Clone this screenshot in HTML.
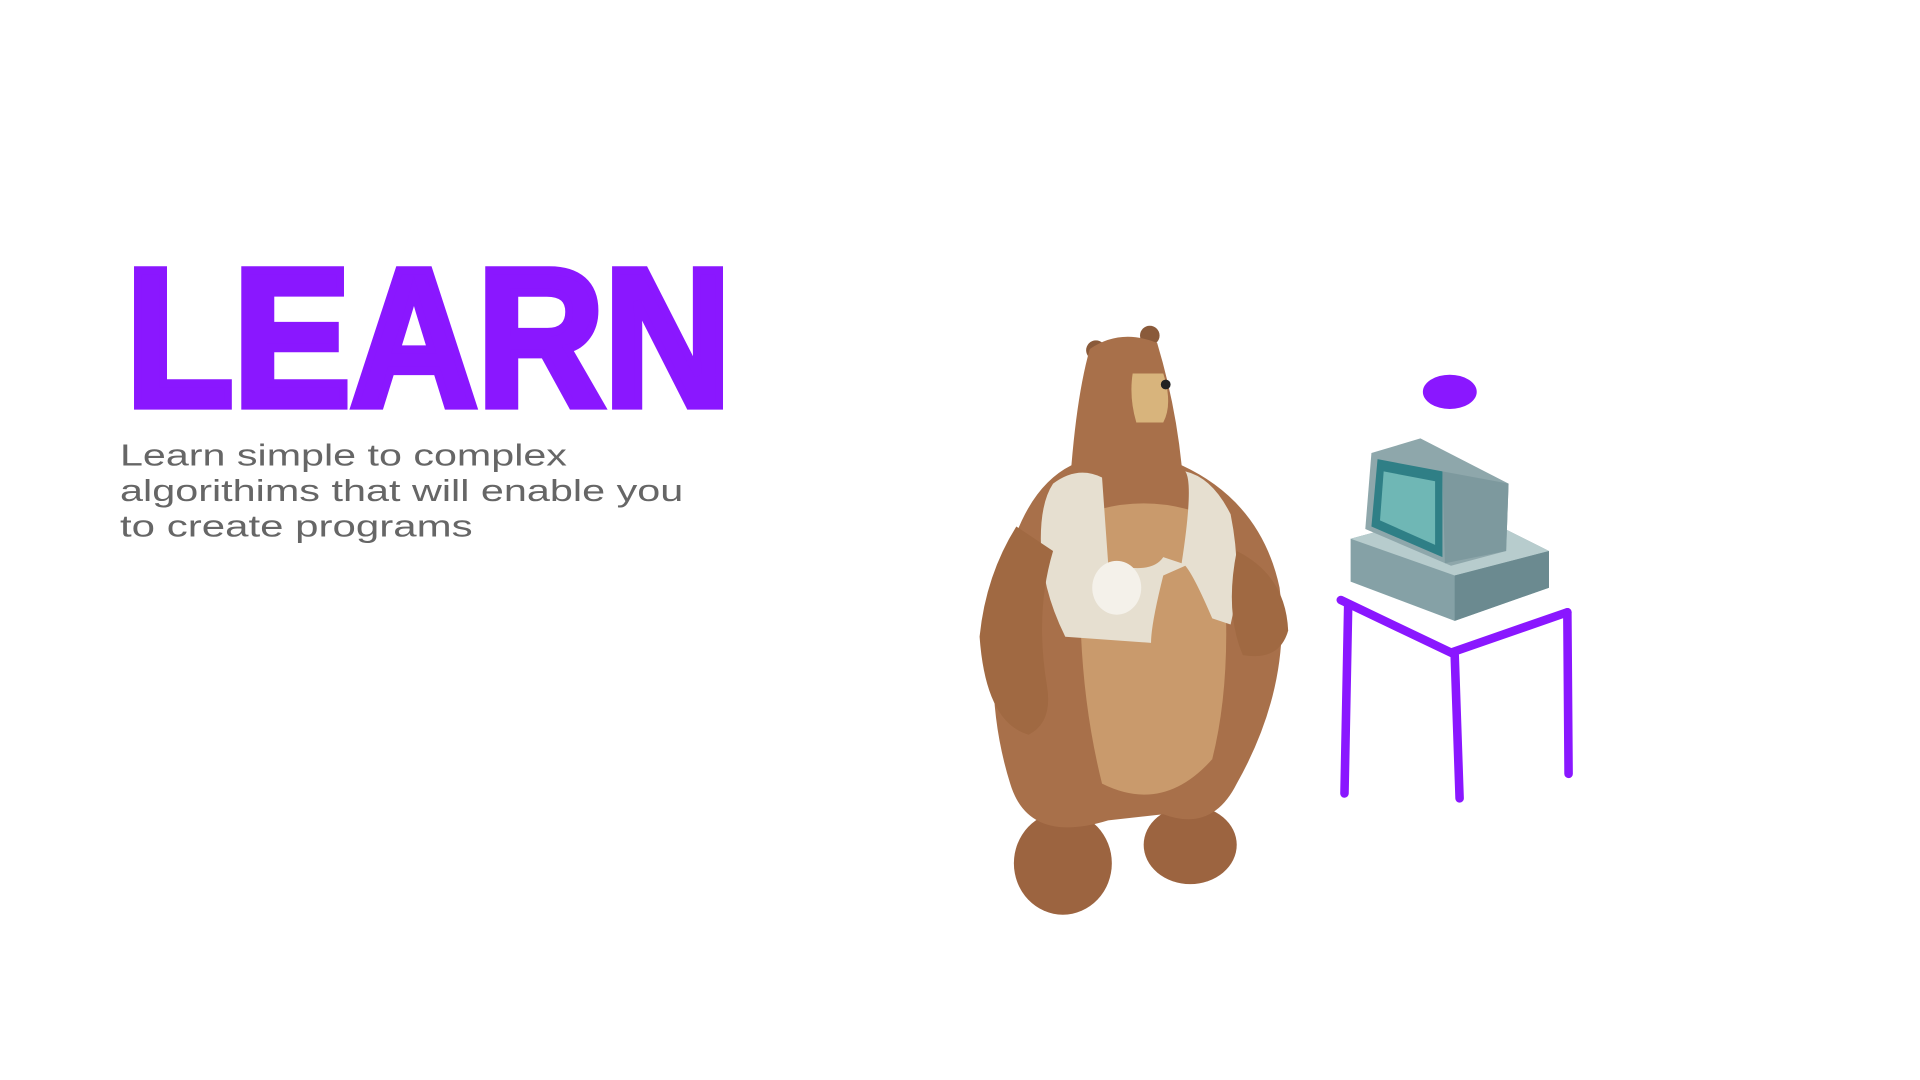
<!DOCTYPE html>
<html><head><meta charset="utf-8"><style>
html,body{margin:0;padding:0;background:#fff;width:1920px;height:1080px;overflow:hidden}
svg{display:block}
</style></head><body>
<svg width="1920" height="1080" viewBox="0 0 1568 882" xmlns="http://www.w3.org/2000/svg">
<text x="103" y="331" font-family="Liberation Sans, sans-serif" font-weight="bold" font-size="160" fill="#8a17ff" stroke="#8a17ff" stroke-width="7" stroke-linejoin="miter" textLength="494" lengthAdjust="spacingAndGlyphs">LEARN</text>
<g font-family="Liberation Sans, sans-serif" font-size="25" fill="#666">
<text x="98" y="380" textLength="365" lengthAdjust="spacingAndGlyphs">Learn simple to complex</text>
<text x="98" y="409" textLength="460" lengthAdjust="spacingAndGlyphs">algorithims that will enable you</text>
<text x="98" y="438" textLength="288" lengthAdjust="spacingAndGlyphs">to create programs</text>
</g>
<!-- bear -->
<g>
<circle cx="895" cy="286" r="8" fill="#8a5a3a"/>
<circle cx="939" cy="274" r="8" fill="#8a5a3a"/>
<ellipse cx="868" cy="705" rx="40" ry="42" fill="#9c6440"/>
<ellipse cx="972" cy="690" rx="38" ry="32" fill="#9c6440"/>
<path d="M890 285 Q915 268 945 280 Q960 330 965 380 Q1030 410 1045 480 Q1055 560 1010 640 Q990 680 950 665 L905 670 Q840 690 825 640 Q800 560 820 470 Q835 400 875 380 Q880 320 890 285Z" fill="#a8704a"/>
<path d="M885 420 Q940 400 995 425 Q1010 540 990 620 Q950 665 900 640 Q875 540 885 420Z" fill="#c99a6c"/>
<path d="M925 305 L950 305 Q958 330 950 345 L928 345 Q922 325 925 305Z" fill="#d8b47c"/>
<circle cx="952" cy="314" r="4" fill="#222"/>
<path d="M860 395 Q880 380 900 390 L905 460 Q940 470 950 455 L965 460 Q975 395 968 385 Q990 390 1005 420 Q1015 470 1005 510 L990 505 Q975 470 968 462 L950 470 Q940 510 940 525 L870 520 Q850 480 850 440 Q850 410 860 395Z" fill="#e6dfd0"/>
<ellipse cx="912" cy="480" rx="20" ry="22" fill="#f4f1ea"/>
<path d="M830 430 Q805 470 800 520 Q805 590 840 600 Q860 590 855 560 Q845 500 860 450Z" fill="#a06942"/>
<path d="M1010 450 Q1050 470 1052 515 Q1045 540 1015 535 Q1000 500 1010 450Z" fill="#a06942"/>
</g>
<!-- computer -->
<path d="M1103 440 L1195 415 L1265 450 L1265 480 L1188 507 L1103 475Z" fill="#85a1a6"/>
<path d="M1103 440 L1188 470 L1265 450 L1195 415Z" fill="#b7cccd"/>
<path d="M1188 470 L1188 507 L1265 480 L1265 450Z" fill="#6b8a90"/>
<path d="M1120 370 L1160 358 L1232 395 L1230 450 L1185 462 L1115 432Z" fill="#8ea7ab"/>
<path d="M1125 375 L1178 385 L1178 455 L1120 430Z" fill="#2f7f86"/>
<path d="M1130 385 L1172 393 L1172 445 L1127 425Z" fill="#6fb7b5"/>
<path d="M1178 385 L1232 395 L1230 450 L1180 460Z" fill="#7d999e"/>
<!-- scribble -->
<ellipse cx="1184" cy="320" rx="22" ry="14" fill="#8a17ff"/>
<!-- table -->
<g stroke="#8a17ff" stroke-width="7" fill="none" stroke-linecap="round">
<path d="M1095 490 L1185 533 L1280 500"/>
<path d="M1101 495 L1098 648"/>
<path d="M1188 535 L1192 652"/>
<path d="M1280 500 L1281 632"/>
</g>
</svg>
</body></html>
